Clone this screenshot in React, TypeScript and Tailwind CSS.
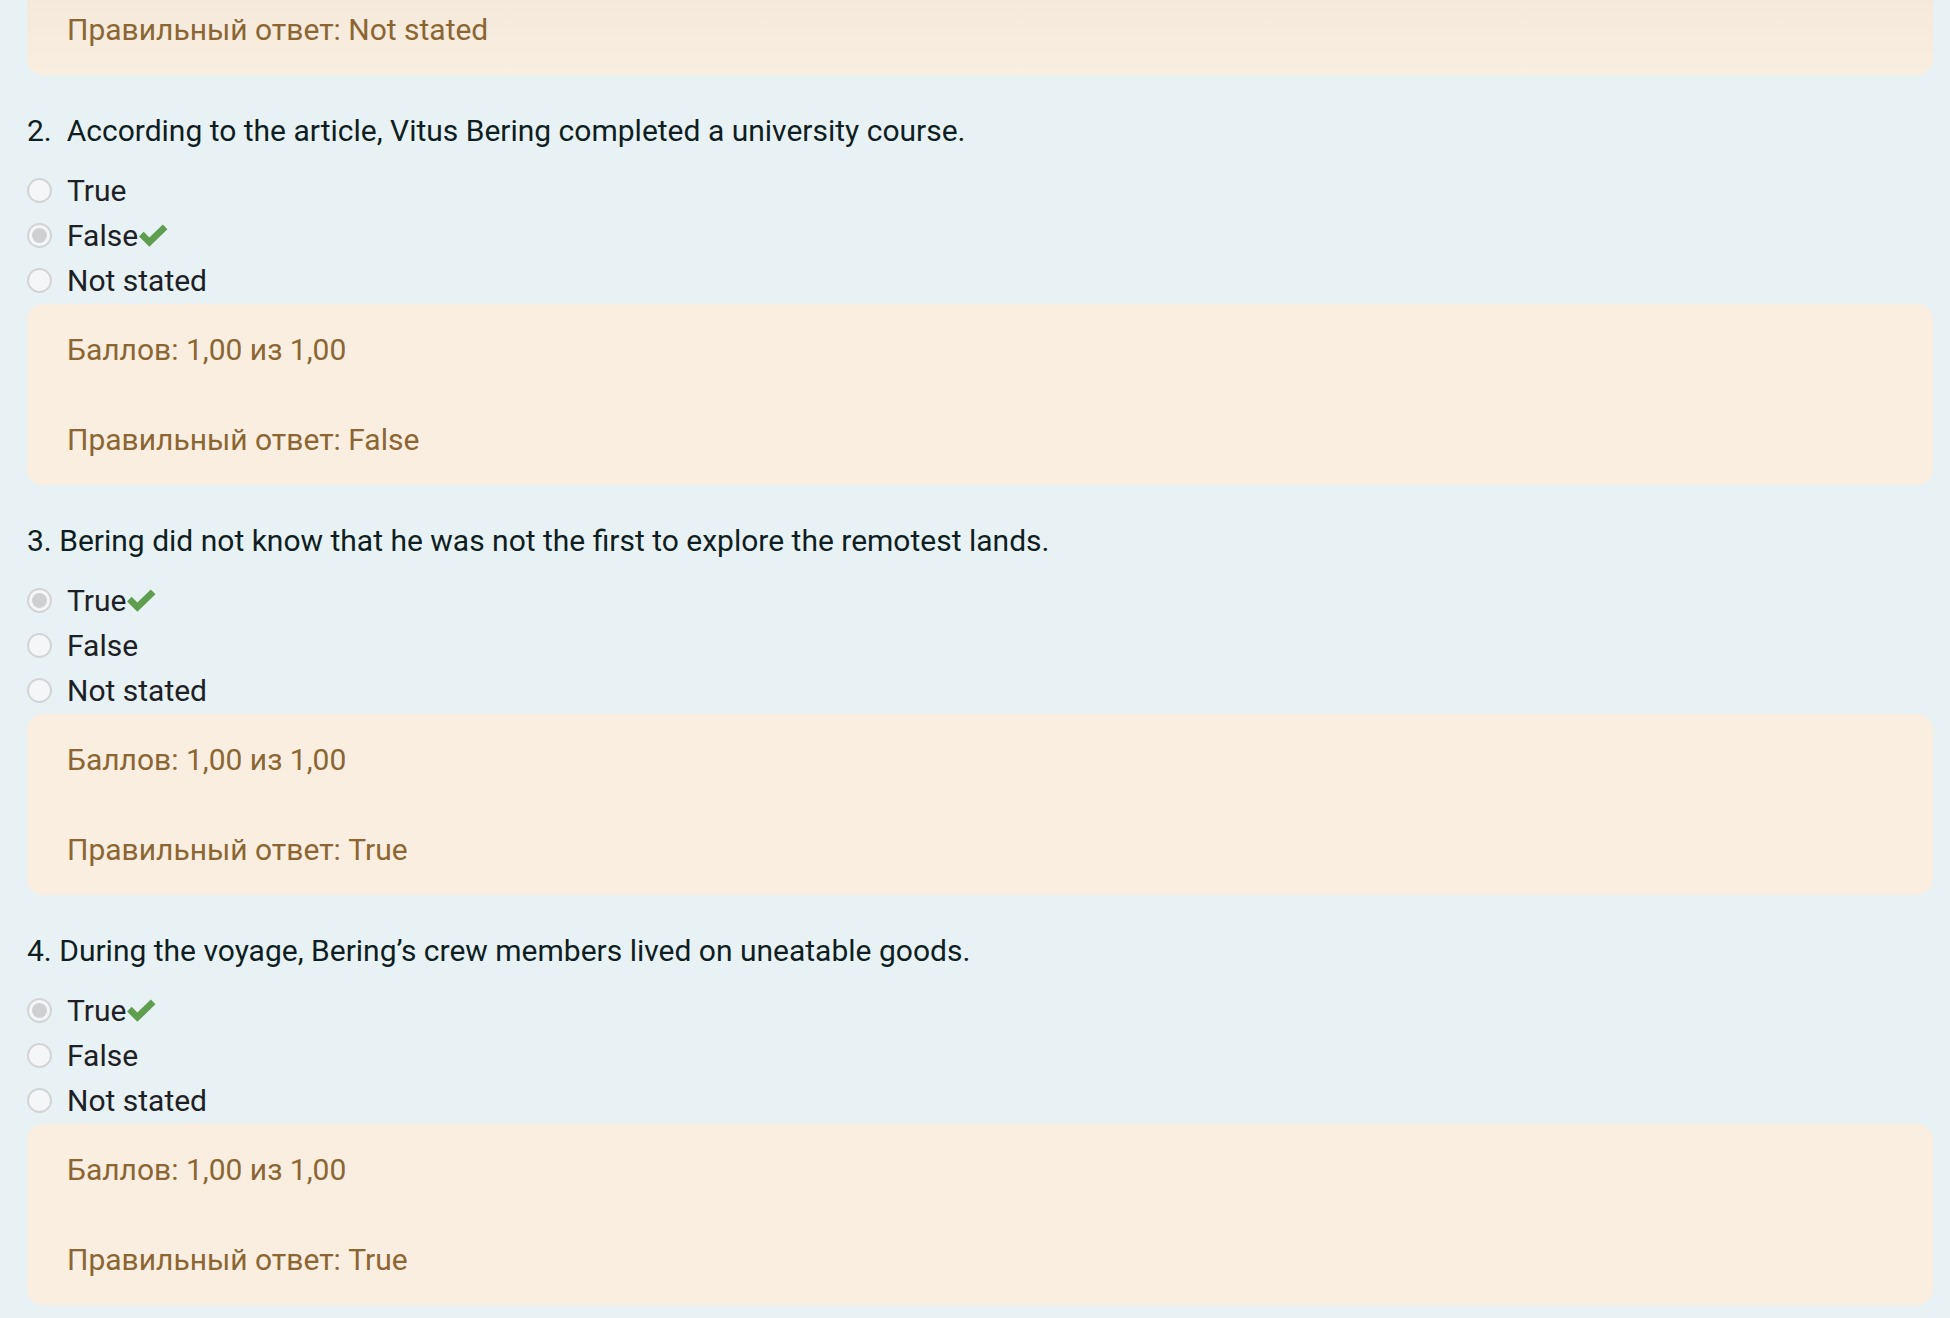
import React from "react";

type Q = { num: string; text: string; picked: string; answer: string };

const questions: Q[] = [
  { num: "2.\u00a0\u00a0", text: "According to the article, Vitus Bering completed a university course.", picked: "False", answer: "False" },
  { num: "3. ", text: "Bering did not know that he was not the first to explore the remotest lands.", picked: "True", answer: "True" },
  { num: "4. ", text: "During the voyage, Bering\u2019s crew members lived on uneatable goods.", picked: "True", answer: "True" },
];

const options = ["True", "False", "Not stated"];

function Radio({ checked }: { checked: boolean }) {
  return (
    <span className="w-[25px] h-[25px] rounded-full border-2 border-[#d2d4d6] bg-[#f4f6f7] flex items-center justify-center shrink-0">
      {checked && <span className="w-[15px] h-[15px] rounded-full bg-[#cfd0d1]" />}
    </span>
  );
}

function Check() {
  return (
    <svg width="31" height="25" viewBox="0 0 30 24" className="mt-[2px]">
      <path d="M1 12 L5.5 7.5 L11 13 L24 0.5 L28.5 5 L11 22 Z" fill="#5f9e4f" />
    </svg>
  );
}

function Outcome({ lines }: { lines: string[] }) {
  return (
    <div className="mt-[1px] bg-[#faeee0] rounded-[16px] px-[40px] py-[23px] text-[#8b6633]">
      {lines.map((l, i) => (
        <p key={i} className={i > 0 ? "mt-[45px]" : ""}>{l}</p>
      ))}
    </div>
  );
}

export default function App() {
  return (
    <div className="min-h-screen bg-[#e8f2f4] pl-[27px] pr-[17px] text-[30px] leading-[45px] text-[#0f1e22]" style={{ fontFamily: "Roboto, 'Noto Sans', sans-serif" }}>
      <div className="rounded-b-[16px] px-[40px] pb-[23px] text-[#8b6633] h-[75px] flex items-end bg-gradient-to-b from-[#f4e9da] to-[#faeee0]">
        <p>Правильный ответ: Not stated</p>
      </div>
      {questions.map((q, i) => (
        <div key={i} className="mt-[33px]">
          <p className="whitespace-pre">{q.num}{q.text}</p>
          <div className="mt-[15px] text-[#1d2125]">
            {options.map((o) => (
              <div key={o} className="flex items-center gap-[15px]">
                <Radio checked={o === q.picked} />
                <span className="flex items-center">
                  {o}
                  {o === q.picked && <Check />}
                </span>
              </div>
            ))}
          </div>
          <Outcome lines={["Баллов: 1,00 из 1,00", "Правильный ответ: " + q.answer]} />
        </div>
      ))}
    </div>
  );
}
